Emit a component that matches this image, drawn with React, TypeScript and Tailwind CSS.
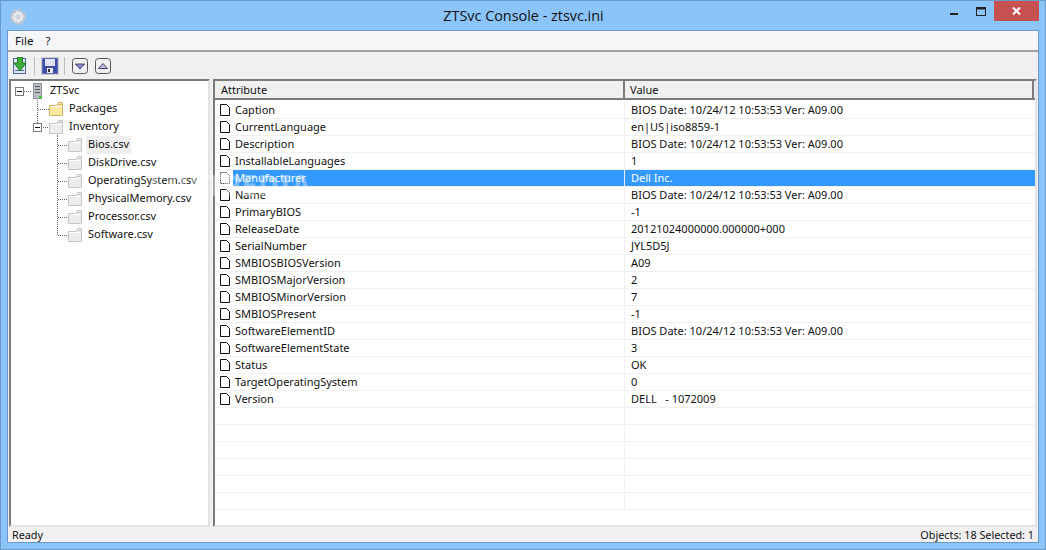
const rows: [string, string][] = [
  ['Caption', 'BIOS Date: 10/24/12 10:53:53 Ver: A09.00'],
  ['CurrentLanguage', 'en|US|iso8859-1'],
  ['Description', 'BIOS Date: 10/24/12 10:53:53 Ver: A09.00'],
  ['InstallableLanguages', '1'],
  ['Manufacturer', 'Dell Inc.'],
  ['Name', 'BIOS Date: 10/24/12 10:53:53 Ver: A09.00'],
  ['PrimaryBIOS', '-1'],
  ['ReleaseDate', '20121024000000.000000+000'],
  ['SerialNumber', 'JYL5D5J'],
  ['SMBIOSBIOSVersion', 'A09'],
  ['SMBIOSMajorVersion', '2'],
  ['SMBIOSMinorVersion', '7'],
  ['SMBIOSPresent', '-1'],
  ['SoftwareElementID', 'BIOS Date: 10/24/12 10:53:53 Ver: A09.00'],
  ['SoftwareElementState', '3'],
  ['Status', 'OK'],
  ['TargetOperatingSystem', '0'],
  ['Version', 'DELL   - 1072009'],
  ['', ''],
  ['', ''],
  ['', ''],
  ['', ''],
  ['', ''],
  ['', ''],
]

const csvFiles = ['Bios.csv', 'DiskDrive.csv', 'OperatingSystem.csv', 'PhysicalMemory.csv', 'Processor.csv', 'Software.csv']

function Folder({ x, color = 'gray' }: { x: number; color?: 'gray' | 'yellow' }) {
  const fill = color === 'yellow' ? '#fbe7a0' : '#ececec'
  const stroke = color === 'yellow' ? '#d2b25e' : '#c4c4c4'
  return (
    <g transform={`translate(${x} 1)`}>
      <path d="M0.5 4.5H8L9.5 1.5H13.5V14.5H0.5Z" fill={fill} stroke={stroke} />
      <path d="M1.5 5.5H12.5" stroke="#ffffff" />
      <path d="M9.5 3.5H12.5" stroke={stroke} />
    </g>
  )
}

function Expander({ x, y }: { x: number; y: number }) {
  return (
    <g>
      <rect x={x + 0.5} y={y + 0.5} width="8" height="8" fill="#ffffff" stroke="#7a7a7a" />
      <path d={`M${x + 2} ${y + 4.5}H${x + 7}`} stroke="#111111" />
    </g>
  )
}

function Dotted({ d }: { d: string }) {
  return <path d={d} stroke="#666666" strokeDasharray="1 1" fill="none" />
}

function TreeRow({ width, label, selected, children }: { width: number; label: string; selected?: boolean; children: React.ReactNode }) {
  return (
    <div className="flex h-[18px] items-center">
      <svg width={width} height="18" className="shrink-0">{children}</svg>
      <span className={`flex h-[18px] items-center px-[2px] pb-[1px] ${selected ? 'bg-[#eeeeee]' : ''}`}>{label}</span>
    </div>
  )
}

function Tree() {
  return (
    <div className="w-[201px] shrink-0 overflow-hidden border-t-2 border-l-2 border-r-2 border-b-2 border-t-[#7c7c7c] border-l-[#7c7c7c] border-r-[#e3e3e3] border-b-[#e3e3e3] bg-white pl-[2px] pt-[1px]">
      <TreeRow width={35} label="ZTSvc">
        <Expander x={2} y={5} />
        <Dotted d="M11 9.5H18" />
        <g transform="translate(20 1)">
          <rect x="0.5" y="0.5" width="8" height="15" fill="#b9bfc4" stroke="#8b9095" />
          <path d="M2 3.5H7M2 6.5H7M2 9.5H7" stroke="#555b60" />
          <rect x="6" y="13" width="3" height="2" fill="#38c838" />
        </g>
      </TreeRow>
      <TreeRow width={54} label="Packages">
        <Dotted d="M24.5 0V18M25 9.5H36" />
        <Folder x={36} color="yellow" />
      </TreeRow>
      <TreeRow width={54} label="Inventory">
        <Dotted d="M24.5 0V5M30 9.5H36" />
        <Expander x={20} y={5} />
        <Dotted d="M44.5 15V18" />
        <Folder x={36} />
      </TreeRow>
      {csvFiles.map((file, i) => (
        <TreeRow key={file} width={73} label={file} selected={i === 0}>
          <Dotted d={i === csvFiles.length - 1 ? 'M44.5 0V9M45 9.5H55' : 'M44.5 0V18M45 9.5H55'} />
          <Folder x={55} />
        </TreeRow>
      ))}
    </div>
  )
}

function DocIcon({ focused }: { focused?: boolean }) {
  return (
    <svg width="10" height="12" className="shrink-0">
      <path
        d="M0.5 0.5H6.5L9.5 3.5V11.5H0.5Z"
        fill="#ffffff"
        stroke="#111111"
        strokeDasharray={focused ? '1 1' : undefined}
      />
    </svg>
  )
}

function ListPanel() {
  return (
    <div className="ml-[3px] flex min-w-0 flex-1 flex-col overflow-hidden border-t-2 border-l-2 border-r-2 border-b-2 border-t-[#7c7c7c] border-l-[#7c7c7c] border-r-[#e3e3e3] border-b-[#e3e3e3] bg-white">
      <div className="flex h-[19px] shrink-0 border-b-2 border-b-[#7c7c7c] bg-[#f0f0f0] pr-[1px]">
        <div className="w-[410px] border-r-2 border-r-[#7c7c7c] pl-[6px] leading-[17px]">Attribute</div>
        <div className="flex-1 border-r-2 border-r-[#7c7c7c] pl-[5px] leading-[17px]">Value</div>
      </div>
      <div className="pt-[2px]">
        {rows.map(([name, value], i) => {
          const selected = name === 'Manufacturer'
          return (
            <div key={i} className="flex h-[17px] border-b border-b-[#f0f0f0]">
              <div className="flex w-[410px] items-center border-r border-r-[#f0f0f0] pl-[5px]">
                {name && <DocIcon focused={selected} />}
                {name && (
                  <span className={`ml-[3px] flex h-[16px] flex-1 items-center pl-[2px] ${selected ? 'bg-[#3399ff] text-white' : ''}`}>{name}</span>
                )}
              </div>
              <div className={`flex flex-1 items-center pl-[6px] whitespace-pre ${selected ? 'bg-[#3399ff] text-white' : ''}`}>{value}</div>
            </div>
          )
        })}
      </div>
    </div>
  )
}

function Toolbar() {
  return (
    <div className="flex h-[27px] shrink-0 items-center bg-[#f0f0f0] pl-[5px]">
      <svg width="15" height="18">
        <rect x="0.5" y="1.5" width="12" height="15" fill="#dfe8f4" stroke="#4a6a94" />
        <path d="M2 13.5H11" stroke="#4a6a94" />
        <path d="M4.5 0H9.5V6H13L7 14L1 6H4.5Z" fill="#3fae3a" stroke="#1f7a24" />
      </svg>
      <div className="ml-[6px] h-[18px] w-px bg-[#bcbcbc]" />
      <div className="ml-[6px] flex h-[18px] w-[18px] items-center justify-center bg-[#c9c9c9]">
        <svg width="16" height="16">
          <path d="M0.5 0.5H15.5V15.5H0.5Z" fill="#3d4ea8" stroke="#5f6fc0" />
          <rect x="3" y="1" width="10" height="7" fill="#dfe3f5" />
          <rect x="5" y="10" width="6" height="5" fill="#e8e8e8" />
          <rect x="6" y="11" width="2" height="3" fill="#333333" />
        </svg>
      </div>
      <div className="ml-[5px] h-[18px] w-px bg-[#bcbcbc]" />
      <svg width="16" height="16" className="ml-[7px]">
        <rect x="0.5" y="0.5" width="15" height="15" rx="3" fill="#f0f0f0" stroke="#555555" />
        <path d="M3.5 6H12.5L8 11Z" fill="#8f8fe0" stroke="#222244" strokeWidth="0.8" />
      </svg>
      <svg width="16" height="16" className="ml-[7px]">
        <rect x="0.5" y="0.5" width="15" height="15" rx="3" fill="#f0f0f0" stroke="#555555" />
        <path d="M3.5 10.5H12.5L8 5.5Z" fill="#b9b9e6" stroke="#222244" strokeWidth="0.8" />
      </svg>
    </div>
  )
}

export default function App() {
  return (
    <div className="flex h-[550px] w-[1046px] flex-col overflow-hidden border border-[#6b9ac9] bg-[#8ac4f8] text-[11px] text-[#111111]" style={{ fontFamily: '"Noto Sans", sans-serif' }}>
      <div className="flex h-[29px] shrink-0 items-start">
        <svg width="18" height="18" className="ml-[8px] mt-[7px] shrink-0">
          <circle cx="9" cy="9" r="6.5" fill="#e6e8ea" stroke="#bfc3c8" strokeWidth="3" strokeDasharray="3 2" />
          <circle cx="9" cy="9" r="2.5" fill="#c9d4de" />
        </svg>
        <div className="flex-1 pt-[4px] pl-[70px] text-center text-[14.4px]" style={{ fontFamily: '"Open Sans", sans-serif' }}>ZTSvc Console - ztsvc.ini</div>
        <div className="flex items-start">
          <svg width="44" height="20">
            <path d="M0 13H8" stroke="#222222" strokeWidth="2" />
            <rect x="26.5" y="6.5" width="9" height="8" fill="none" stroke="#222222" />
            <path d="M26 7.5H36" stroke="#222222" strokeWidth="2" />
          </svg>
          <div className="mr-[6px] flex h-[20px] w-[45px] items-center justify-center bg-[#c75050]">
            <svg width="9" height="8"><path d="M1 0.5L8 7.5M8 0.5L1 7.5" stroke="#ffffff" strokeWidth="2" /></svg>
          </div>
        </div>
      </div>

      <div className="mx-[6px] flex h-[513px] flex-col border border-[#6b9ac9] bg-[#f0f0f0]">
        <div className="flex h-[21px] shrink-0 items-center gap-[12px] border-b-2 border-b-[#a0a0a0] bg-[#f5f6f7] pl-[7px] text-[11.5px]">
          <span>File</span>
          <span>?</span>
        </div>
        <Toolbar />
        <div className="relative flex min-h-0 flex-1 pl-[1px] pr-[1px]">
          <Tree />
          <ListPanel />
          <div className="pointer-events-none absolute left-[142px] top-[85px] text-[28px] font-bold tracking-[1px] text-white opacity-35">SOFTPEDIA</div>
        </div>
        <div className="flex h-[15px] shrink-0 items-center justify-between pl-[4px] pr-[4px] pt-[1px] text-[10.8px]">
          <span>Ready</span>
          <span>Objects: 18 Selected: 1</span>
        </div>
      </div>
    </div>
  )
}
